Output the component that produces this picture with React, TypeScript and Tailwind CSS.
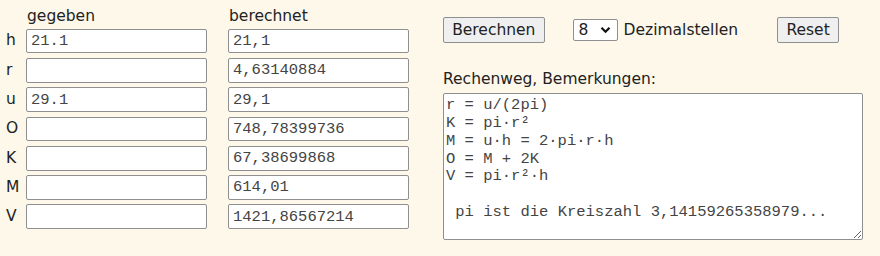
import React from "react";

const rows = [
  { label: "h", given: "21.1", result: "21,1" },
  { label: "r", given: "", result: "4,63140884" },
  { label: "u", given: "29.1", result: "29,1" },
  { label: "O", given: "", result: "748,78399736" },
  { label: "K", given: "", result: "67,38699868" },
  { label: "M", given: "", result: "614,01" },
  { label: "V", given: "", result: "1421,86567214" },
];

const notes = `r = u/(2pi)
K = pi·r²
M = u·h = 2·pi·r·h
O = M + 2K
V = pi·r²·h

 pi ist die Kreiszahl 3,14159265358979...`;

const fieldCls =
  "block h-[24.7px] w-[181px] rounded-[2px] border border-[#8f8f8f] bg-white px-[4px] text-[15.5px] text-[#444] outline-none [font-family:'Liberation_Mono',monospace]";

export default function App() {
  return (
    <div className="h-[256px] w-[880px] bg-[#fdf8ea] text-[15.5px] text-[#222] [font-family:'DejaVu_Sans',Verdana,sans-serif]">
      <div className="flex pl-[6px] pt-[5px]">
        {/* ===== Eingabe / Ergebnis ===== */}
        <div className="flex">
          <div className="flex w-[20px] flex-col gap-[4.6px] pt-[23.7px]">
            {rows.map((r) => (
              <div key={r.label} className="flex h-[24.7px] items-center">
                {r.label}
              </div>
            ))}
          </div>
          <div className="flex flex-col gap-[4.6px]">
            <div className="flex h-[19.1px] items-end pl-[1px] leading-[15px]">gegeben</div>
            {rows.map((r) => (
              <input key={r.label} className={fieldCls} defaultValue={r.given} />
            ))}
          </div>
          <div className="ml-[21px] flex flex-col gap-[4.6px]">
            <div className="flex h-[19.1px] items-end pl-[1px] leading-[15px]">berechnet</div>
            {rows.map((r) => (
              <input key={r.label} className={fieldCls} defaultValue={r.result} />
            ))}
          </div>
        </div>

        {/* ===== Steuerung + Rechenweg ===== */}
        <div className="ml-[34px] flex flex-col">
          <div className="mt-[12.3px] flex items-center">
            <button className="h-[26px] w-[101.6px] rounded-[2px] border border-[#8f8f8f] bg-[#efefef] text-[15.5px] text-[#222]">
              Berechnen
            </button>
            <div className="ml-[28px] flex h-[22.3px] w-[45px] items-center justify-between rounded-[2px] border border-[#8f8f8f] bg-white pl-[5px] pr-[6px]">
              <span>8</span>
              <svg width="11" height="8" viewBox="0 0 11 8">
                <path d="M1.5 1.8 L5.5 5.8 L9.5 1.8" fill="none" stroke="#111" strokeWidth="2.2" />
              </svg>
            </div>
            <span className="ml-[6px]">Dezimalstellen</span>
            <button className="ml-[39px] h-[26px] w-[62px] rounded-[2px] border border-[#8f8f8f] bg-[#efefef] text-[15.5px] text-[#222]">
              Reset
            </button>
          </div>
          <div className="mt-[27px] leading-[19px]">Rechenweg, Bemerkungen:</div>
          <textarea
            className="mt-[4px] h-[147px] w-[420px] rounded-[2px] border border-[#8f8f8f] bg-white px-[2px] py-[3px] text-[15.5px] leading-[17.75px] text-[#444] outline-none [font-family:'Liberation_Mono',monospace]"
            defaultValue={notes}
          />
        </div>
      </div>
    </div>
  );
}
